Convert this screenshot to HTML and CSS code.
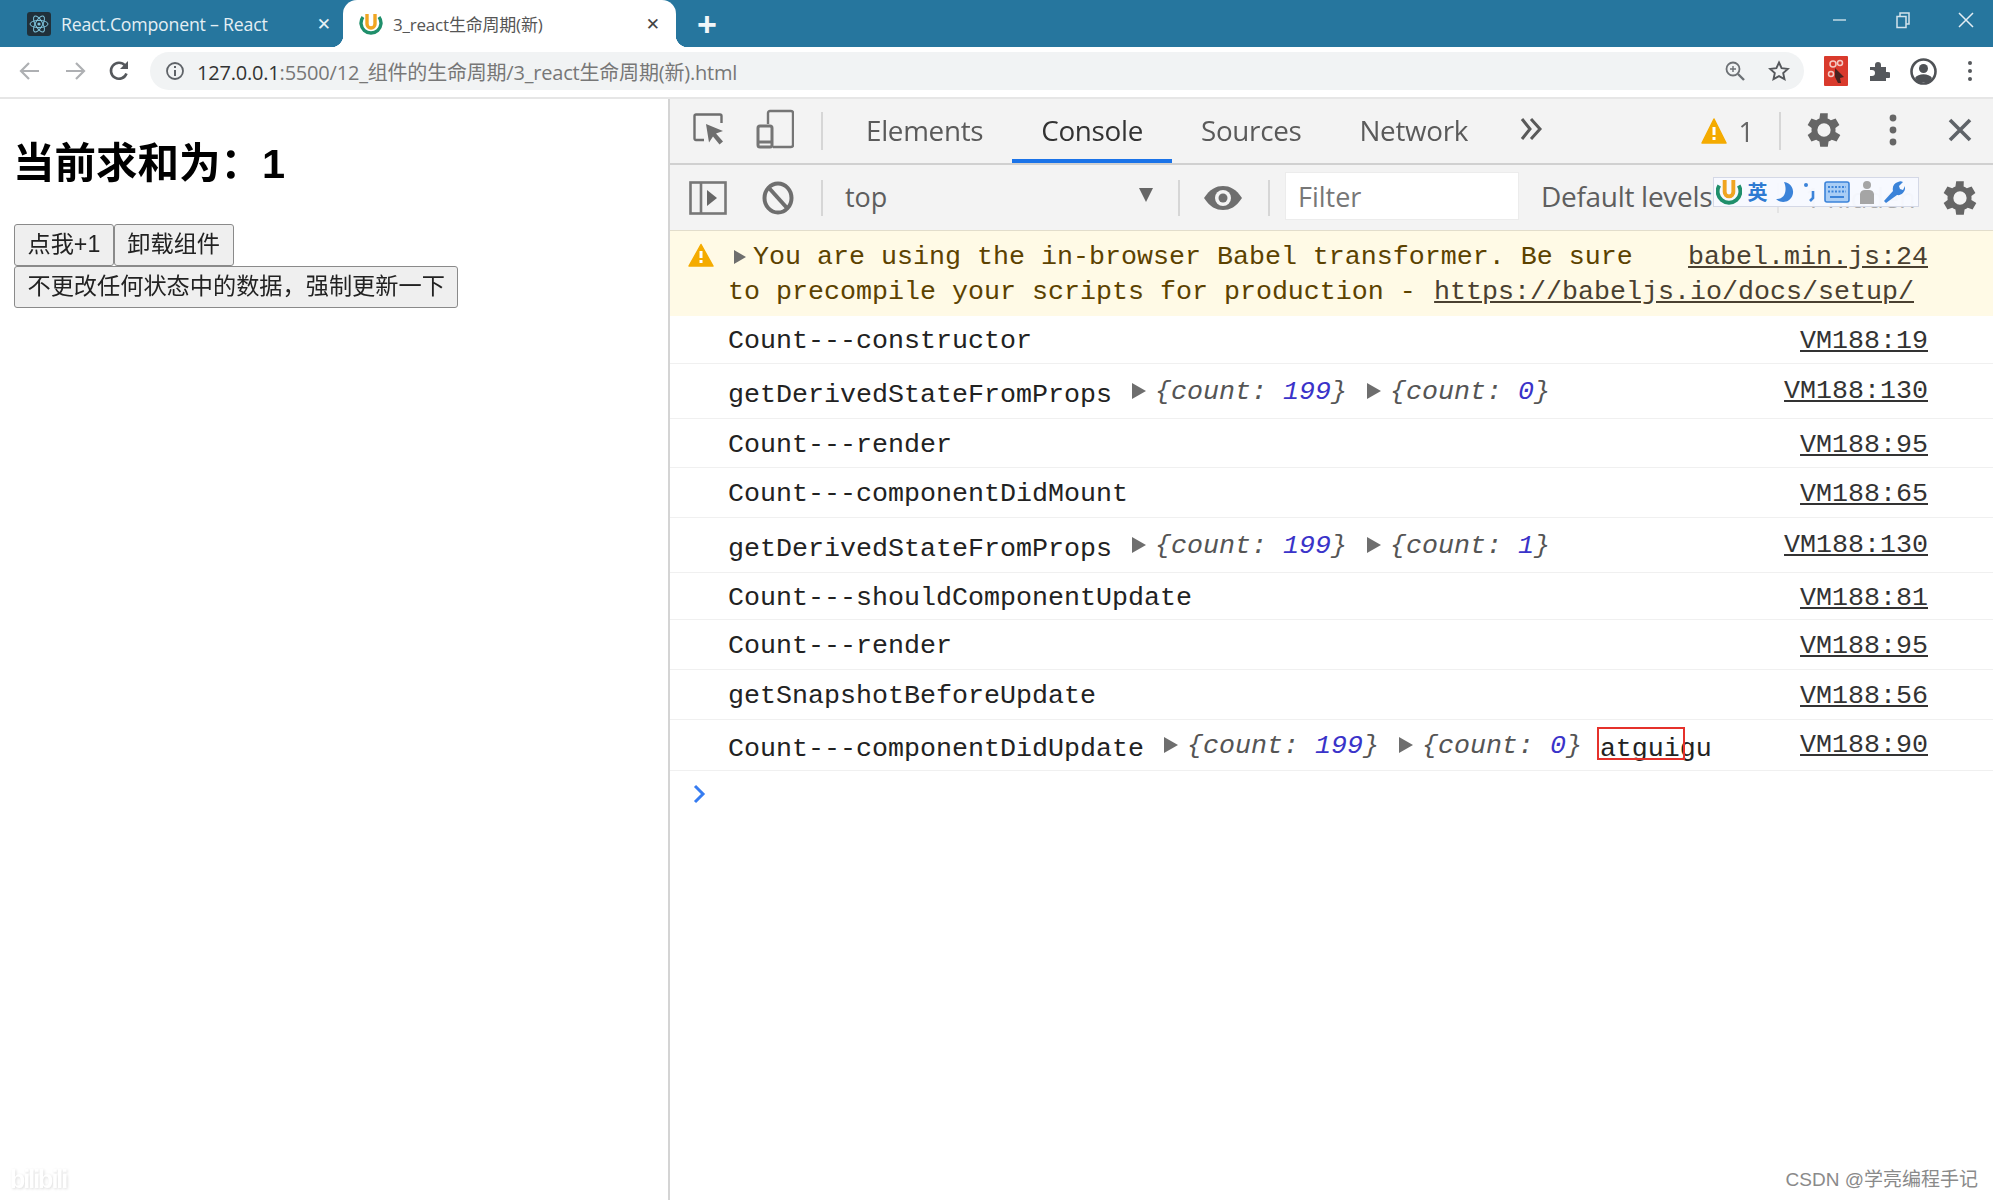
FILE: index.html
```html
<!DOCTYPE html>
<html lang="zh-CN">
<head>
<meta charset="utf-8">
<title>3_react生命周期(新)</title>
<link rel="stylesheet" href="styles.css">
</head>
<body>
<div class="app">
  <header class="tabstrip">
    <div class="tab">
      <svg class="favicon" width="24" height="24" viewBox="0 0 24 24"><rect width="24" height="24" rx="3" fill="#20303a"/><g fill="none" stroke="#7fc4dc" stroke-width="1"><ellipse cx="12" cy="12" rx="9" ry="3.6"/><ellipse cx="12" cy="12" rx="9" ry="3.6" transform="rotate(60 12 12)"/><ellipse cx="12" cy="12" rx="9" ry="3.6" transform="rotate(120 12 12)"/></g><circle cx="12" cy="12" r="1.6" fill="#7fc4dc"/></svg>
      <span class="tab-title tab-title-dark">React.Component – React</span>
      <span class="tab-close tab-close-light">✕</span>
    </div>
    <div class="tab tab-active">
      <svg class="favicon" width="24" height="26" viewBox="0 0 24 26"><path d="M4 6a10 10 0 1 0 16 0" fill="none" stroke="#1f8f6b" stroke-width="3.4"/><path d="M8 3v10a4 4 0 0 0 8 0V3" fill="none" stroke="#f0a522" stroke-width="3.4"/></svg>
      <span class="tab-title">3_react生命周期(新)</span>
      <span class="tab-close">✕</span>
    </div>
    <span class="newtab">+</span>
    <div class="winctl">
      <svg width="16" height="16" viewBox="0 0 16 16"><path d="M1 8h13" stroke="#b9d3e0" stroke-width="1.6"/></svg>
      <svg width="16" height="18" viewBox="0 0 16 18"><path d="M2 5.500h9v11H2zM5 5V2h9v11h-3" fill="none" stroke="#d3e3ec" stroke-width="1.500"/></svg>
      <svg width="16" height="18" viewBox="0 0 16 18"><path d="M1 2l14 14M15 2L1 16" stroke="#e3edf3" stroke-width="1.500"/></svg>
    </div>
  </header>

  <nav class="omnibar">
    <svg class="nav-back" width="24" height="24" viewBox="0 0 24 24"><path d="M21 12H4M11 4l-8 8 8 8" fill="none" stroke="#aeb0b3" stroke-width="2.200"/></svg>
    <svg class="nav-fwd" width="24" height="24" viewBox="0 0 24 24"><path d="M3 12h17M13 4l8 8-8 8" fill="none" stroke="#aeb0b3" stroke-width="2.200"/></svg>
    <svg class="nav-reload" width="24" height="24" viewBox="0 0 24 24"><path d="M19.500 14.500A8 8 0 1 1 18 6.500" fill="none" stroke="#55585c" stroke-width="2.600"/><path d="M21 2v8h-8z" fill="#55585c"/></svg>
    <div class="urlbox">
      <svg width="20" height="20" viewBox="0 0 20 20"><circle cx="10" cy="10" r="8" fill="none" stroke="#5f6368" stroke-width="1.800"/><path d="M10 9v6M10 5v2" stroke="#5f6368" stroke-width="2"/></svg>
      <span class="url"><span class="url-host">127.0.0.1</span>:5500/12_组件的生命周期/3_react生命周期(新).html</span>
      <svg class="url-zoom" width="22" height="22" viewBox="0 0 22 22"><circle cx="9" cy="9" r="6.500" fill="none" stroke="#6c7074" stroke-width="1.800"/><path d="M14 14l6 6" stroke="#6c7074" stroke-width="2.400"/><path d="M9 6v6M6 9h6" stroke="#6c7074" stroke-width="1.400"/></svg>
      <svg class="url-star" width="22" height="22" viewBox="0 0 22 22"><path d="M11 2.500l2.600 5.700 6.200.7-4.600 4.200 1.300 6.100L11 16.100l-5.500 3.100 1.300-6.100L2.200 8.900l6.200-.7z" fill="none" stroke="#55585c" stroke-width="1.900"/></svg>
    </div>
    <svg class="ext-red" width="24" height="30" viewBox="0 0 24 30"><rect width="24" height="30" rx="1" fill="#d93a2c"/><circle cx="9" cy="8" r="3" fill="none" stroke="#f3c9c2" stroke-width="1.500"/><circle cx="16" cy="7" r="2.500" fill="none" stroke="#f3c9c2" stroke-width="1.500"/><circle cx="7" cy="18" r="2.500" fill="none" stroke="#f3c9c2" stroke-width="1.500"/><path d="M11 12l9 9-4 1 1 5-3 0-3-6z" fill="#4a2320"/></svg>
    <svg class="ext-puzzle" width="22" height="22" viewBox="0 0 22 22"><path d="M2 7h5V5a3 3 0 0 1 6 0v2h5v5h2a3 3 0 0 1 0 6h-2v3H2v-5h2a3 3 0 0 0 0-6H2z" fill="#55585c"/></svg>
    <svg class="ext-profile" width="27" height="27" viewBox="0 0 27 27"><circle cx="13.500" cy="13.500" r="12" fill="#fff" stroke="#4f5256" stroke-width="2.600"/><circle cx="13.500" cy="10.500" r="4.500" fill="#4f5256"/><path d="M5 20c3-5 14-5 17 0l-3 4H8z" fill="#4f5256"/></svg>
    <svg class="ext-menu" width="6" height="24" viewBox="0 0 6 24"><g fill="#55585c"><circle cx="3" cy="4" r="2"/><circle cx="3" cy="12" r="2"/><circle cx="3" cy="20" r="2"/></g></svg>
  </nav>

  <main class="split">
    <section class="page">
      <h1 class="sum">当前求和为：1</h1>
      <div class="btns">
        <button class="btn">点我+1</button><button class="btn">卸载组件</button><button class="btn">不更改任何状态中的数据，强制更新一下</button>
      </div>
    </section>

    <section class="devtools">
      <div class="dt-tabs">
        <svg class="dt-inspect" width="34" height="34" viewBox="0 0 34 34"><path d="M11 28H3a1.500 1.500 0 0 1-1.500-1.500V4A1.500 1.500 0 0 1 3 2.500h24A1.500 1.500 0 0 1 28.500 4v7" fill="none" stroke="#6e6e6e" stroke-width="2.400"/><path d="M13 12l17 7-7 2.500 7 8-3.500 3-6.500-8-4 6z" fill="#6e6e6e"/></svg>
        <svg class="dt-device" width="38" height="40" viewBox="0 0 38 40"><path d="M12 15V4a2 2 0 0 1 2-2h21a2 2 0 0 1 2 2v32a2 2 0 0 1-2 2H17" fill="none" stroke="#757575" stroke-width="2.400"/><rect x="2" y="17" width="14" height="21" rx="2" fill="none" stroke="#757575" stroke-width="3"/><path d="M2 33h14" stroke="#757575" stroke-width="3"/></svg>
        <i class="vsep vsep-tabs"></i>
        <span class="dt-tab">Elements</span>
        <span class="dt-tab dt-tab-on">Console</span>
        <span class="dt-tab">Sources</span>
        <span class="dt-tab">Network</span>
        <svg class="dt-more" width="24" height="24" viewBox="0 0 24 24"><path d="M3 2l8 10-8 10M12 2l9 10-9 10" fill="none" stroke="#5a5a5a" stroke-width="3"/></svg>
        <div class="dt-right">
          <svg width="26" height="26" viewBox="0 0 26 26"><path d="M13 1L25 25H1z" fill="#f4ab00" stroke="#f4ab00" stroke-width="1.500" stroke-linejoin="round"/><path d="M13 9v8M13 19v3" stroke="#fff" stroke-width="3"/></svg>
          <span class="warn-count">1</span>
          <i class="vsep vsep-warn"></i>
          <svg class="gear" width="38" height="38" viewBox="2 2 20 20"><path fill="#666" d="M19.400 13a7.500 7.500 0 0 0 0-2l2.100-1.600-2-3.500-2.500 1a7.500 7.500 0 0 0-1.700-1L15.400 3.200h-4l-.4 2.700a7.500 7.500 0 0 0-1.700 1l-2.500-1-2 3.500L6.900 11a7.500 7.500 0 0 0 0 2l-2.100 1.600 2 3.500 2.500-1a7.500 7.500 0 0 0 1.700 1l.4 2.700h4l.4-2.700a7.500 7.500 0 0 0 1.700-1l2.500 1 2-3.500zM13.400 15.500a3.500 3.500 0 1 1 0-7 3.500 3.500 0 0 1 0 7z" transform="translate(-1.400 0)"/></svg>
          <svg class="kebab" width="10" height="34" viewBox="0 0 10 34"><g fill="#666"><circle cx="5" cy="5" r="3.400"/><circle cx="5" cy="17" r="3.400"/><circle cx="5" cy="29" r="3.400"/></g></svg>
          <svg class="dt-x" width="26" height="26" viewBox="0 0 26 26"><path d="M3 3l20 20M23 3L3 23" stroke="#5f6368" stroke-width="3.600"/></svg>
        </div>
      </div>

      <div class="dt-bar">
        <svg class="bar-side" width="38" height="34" viewBox="0 0 38 34"><rect x="1.500" y="1.500" width="35" height="31" fill="none" stroke="#777" stroke-width="2.600"/><path d="M12 2v30" stroke="#777" stroke-width="2.600"/><path d="M18 9l10 8-10 8z" fill="#666"/></svg>
        <svg class="bar-block" width="32" height="34" viewBox="0 0 32 34"><ellipse cx="16" cy="17" rx="13.500" ry="14.500" fill="none" stroke="#6e6e6e" stroke-width="4"/><path d="M7 7l18 20" stroke="#6e6e6e" stroke-width="4"/></svg>
        <i class="vsep vsep-bar1"></i>
        <span class="ctx">top</span>
        <svg class="caret" width="16" height="16" viewBox="0 0 16 16"><path d="M1 1h14L8 15z" fill="#666"/></svg>
        <i class="vsep vsep-bar2"></i>
        <svg class="eye" width="40" height="26" viewBox="0 0 40 26"><path d="M1 13C7 4 13 1 20 1s13 3 19 12c-6 9-12 12-19 12S7 22 1 13z" fill="#6e6e6e"/><circle cx="20" cy="13" r="8" fill="#f3f3f3"/><circle cx="20" cy="13" r="4.500" fill="#6e6e6e"/></svg>
        <i class="vsep vsep-bar3"></i>
        <div class="filter">Filter</div>
        <span class="levels">Default levels</span>
        <i class="vsep vsep-bar4"></i>
        <span class="hidden-count">1 hidden</span>
        <svg class="bar-gear" width="38" height="38" viewBox="2 2 20 20"><path fill="#666" d="M19.400 13a7.500 7.500 0 0 0 0-2l2.100-1.600-2-3.500-2.500 1a7.500 7.500 0 0 0-1.700-1L15.400 3.200h-4l-.4 2.700a7.500 7.500 0 0 0-1.700 1l-2.500-1-2 3.500L6.900 11a7.500 7.500 0 0 0 0 2l-2.100 1.600 2 3.500 2.500-1a7.500 7.500 0 0 0 1.700 1l.4 2.700h4l.4-2.700a7.500 7.500 0 0 0 1.700-1l2.500 1 2-3.500zM13.400 15.500a3.500 3.500 0 1 1 0-7 3.500 3.500 0 0 1 0 7z" transform="translate(-1.400 0)"/></svg>
        <div class="ime">
          <svg width="26" height="30" viewBox="0 0 24 26"><path d="M3 7a10.500 10.500 0 1 0 18 0" fill="none" stroke="#1f8f6b" stroke-width="3.600"/><path d="M8 2v11a4 4 0 0 0 8 0V2" fill="none" stroke="#f0a522" stroke-width="3.600"/></svg>
          <span class="ime-lang">英</span>
          <svg width="20" height="22" viewBox="0 0 20 22"><path d="M9 1a10 10 0 1 1-8 17c8 1 12-8 8-17z" fill="#3b83d9"/></svg>
          <svg width="14" height="20" viewBox="0 0 14 20"><circle cx="3" cy="3" r="2" fill="#3b83d9"/><path d="M10 9v7l-3 3" fill="none" stroke="#3b83d9" stroke-width="2.600"/></svg>
          <svg width="26" height="22" viewBox="0 0 26 22"><rect x="1" y="1" width="24" height="20" rx="2" fill="#a9cdf5" stroke="#3b83d9" stroke-width="1.600"/><path d="M4 6h18M4 10.500h18" stroke="#3b83d9" stroke-width="2" stroke-dasharray="2 1.500"/><path d="M6 16h14" stroke="#3b83d9" stroke-width="2"/></svg>
          <svg width="18" height="24" viewBox="0 0 18 24"><circle cx="9" cy="5" r="4" fill="#a5a5a5"/><path d="M2 24V14a5 5 0 0 1 5-4h4a5 5 0 0 1 5 4v10z" fill="#a5a5a5"/></svg>
          <svg width="22" height="24" viewBox="0 0 22 24"><path d="M3 23l-2-2 9-10c-1-4 1-8 5-9 2-1 3-1 5 0l-4 4 1 3 3 1 2-4c1 5-3 10-8 9z" fill="#3b83d9"/></svg>
        </div>
      </div>

      <div class="console">
        <div class="row row-warn">
          <svg class="warn-icon" width="26" height="24" viewBox="0 0 26 24"><path d="M13 1.500L25 23H1z" fill="#f4ab00" stroke="#f4ab00" stroke-width="1.500" stroke-linejoin="round"/><path d="M13 8v7M13 17v3" stroke="#fff" stroke-width="3"/></svg>
          <div class="warn-msg">
            <div class="warn-line"><i class="tri tri-warn"></i>You are using the in-browser Babel transformer. Be sure<a class="src src-warn">babel.min.js:24</a></div>
            <div class="warn-line warn-line2">to precompile your scripts for production - <a class="warn-link">https://babeljs.io/docs/setup/</a></div>
          </div>
        </div>
        <div class="row"><span class="log">Count---constructor</span><a class="src">VM188:19</a></div>
        <div class="row"><span class="log log-low">getDerivedStateFromProps</span><i class="tri"></i><span class="obj">{count: <b class="num">199</b>}</span><i class="tri"></i><span class="obj">{count: <b class="num">0</b>}</span><a class="src src-hi">VM188:130</a></div>
        <div class="row"><span class="log">Count---render</span><a class="src">VM188:95</a></div>
        <div class="row"><span class="log">Count---componentDidMount</span><a class="src">VM188:65</a></div>
        <div class="row"><span class="log log-low">getDerivedStateFromProps</span><i class="tri"></i><span class="obj">{count: <b class="num">199</b>}</span><i class="tri"></i><span class="obj">{count: <b class="num">1</b>}</span><a class="src src-hi">VM188:130</a></div>
        <div class="row"><span class="log">Count---shouldComponentUpdate</span><a class="src">VM188:81</a></div>
        <div class="row"><span class="log">Count---render</span><a class="src">VM188:95</a></div>
        <div class="row"><span class="log">getSnapshotBeforeUpdate</span><a class="src">VM188:56</a></div>
        <div class="row"><span class="log log-low">Count---componentDidUpdate</span><i class="tri"></i><span class="obj">{count: <b class="num">199</b>}</span><i class="tri"></i><span class="obj">{count: <b class="num">0</b>}</span><span class="log log-low log-tag">atguigu<i class="redbox"></i></span><a class="src src-hi">VM188:90</a></div>
        <div class="prompt"><svg width="14" height="20" viewBox="0 0 14 20"><path d="M3 2l8 8-8 8" fill="none" stroke="#367cf1" stroke-width="3"/></svg></div>
      </div>
    </section>
  </main>
  <span class="wm-bili">bilibili</span>
  <span class="wm-csdn">CSDN @学亮编程手记</span>
</div>
</body>
</html>
```

FILE: styles.css
```css
* { box-sizing: border-box; }
html, body { margin: 0; height: 100%; overflow: hidden; background: #fff; }
body { font-family: "Open Sans", "Noto Sans CJK SC", sans-serif; }
.app { position: relative; width: 1993px; height: 1200px; display: flex; flex-direction: column; overflow: hidden; filter: blur(.55px); }

.tabstrip { flex: 0 0 47px; display: flex; align-items: center; background: #26769e; }
.tab { position: relative; width: 343px; height: 47px; display: flex; align-items: center; padding: 0 12px 0 27px; }
.tab-active { width: 333px; padding: 0 16px 0 16px; background: #fff; border-radius: 14px 14px 0 0; }
.tab-active::before, .tab-active::after { content: ""; position: absolute; bottom: 0; width: 12px; height: 12px; }
.tab-active::before { left: -12px; background: radial-gradient(circle at 0 0, #26769e 12px, #fff 12.500px); }
.tab-active::after { right: -12px; background: radial-gradient(circle at 100% 0, #26769e 12px, #fff 12.500px); }
.favicon { flex: none; }
.tab-title { margin-left: 10px; flex: 1; font-family: "Open Sans", "Noto Sans CJK SC", sans-serif; font-size: 17px; color: #555; white-space: nowrap; letter-spacing: -.2px; }
.tab-title-dark { margin-left: 10px; font-size: 17.700px; color: #e4eff4; }
.tab-close { font-size: 17px; font-weight: 700; color: #444; font-family: "DejaVu Sans", sans-serif; }
.tab-close-light { color: #e8f1f5; }
.newtab { margin-left: 21px; font: 700 34px/1 "Liberation Sans", sans-serif; color: #f1f6f9; }
.winctl { margin-left: auto; display: flex; align-items: center; gap: 47px; padding-right: 19px; margin-top: -7px; }

.omnibar { flex: 0 0 52px; display: flex; align-items: center; background: #fff; border-bottom: 2px solid #e6e6e6; padding: 0 0 2px 18px; }
.nav-fwd { margin-left: 21px; }
.nav-reload { margin-left: 20px; }
.urlbox { width: 1654px; height: 38px; margin-left: 19px; flex: none; border-radius: 19px; background: #f1f3f4; display: flex; align-items: center; padding: 0 14px 0 15px; }
.url { margin-left: 12px; font: 20px "Open Sans", "Noto Sans CJK SC", sans-serif; color: #777; letter-spacing: -.2px; white-space: nowrap; }
.url-host { color: #333; }
.url-zoom { margin-left: auto; }
.url-star { margin-left: 22px; }
.ext-red { margin-left: 20px; }
.ext-puzzle { margin-left: 20px; }
.ext-profile { margin-left: 20px; }
.ext-menu { margin-left: 30px; }

.split { flex: 1; display: flex; min-height: 0; }
.page { width: 670px; flex: none; border-right: 2px solid #d4d4d4; padding: 0 0 0 14px; }
.sum { margin: 40px 0 0 -1px; font: 700 41.500px/50px "Liberation Sans", "Noto Sans CJK SC", sans-serif; color: #000; }
.btns { margin-top: 35px; font-size: 0; }
.btn { height: 42px; padding: 0 12.500px; margin: 0; vertical-align: top; font: 23.200px/1 "Liberation Sans", "Noto Sans CJK SC", sans-serif; color: #222; background: #efefef; border: 1.500px solid #8a8a8a; border-radius: 3px; }

.devtools { flex: 1; min-width: 0; display: flex; flex-direction: column; position: relative; }
.dt-tabs { flex: 0 0 64px; display: flex; align-items: center; background: #f3f3f3; border-bottom: 2px solid #d0d0d0; padding-left: 23px; color: #5a5a5a; }
.dt-inspect { margin-top: -4px; }
.dt-device { margin-left: 29px; margin-top: -4px; }
.vsep { width: 2px; height: 38px; background: #d6d6d6; flex: none; }
.vsep-tabs { margin-left: 27px; }
.dt-tab { height: 64px; display: flex; align-items: center; padding: 0 29px 3px; font-size: 27.800px; letter-spacing: -.3px; }
.dt-tab:first-of-type { margin-left: 14px; }
.dt-tab-on { color: #333; box-shadow: inset 0 -4px 0 #1a73e8; position: relative; }
.dt-more { margin-left: 22px; margin-top: -4px; }
.dt-right { margin-left: auto; display: flex; align-items: center; padding-right: 20px; }
.warn-count { margin-left: 12px; font-size: 27px; color: #666; }
.vsep-warn { margin-left: 25px; }
.gear { margin-left: 24px; margin-top: -2px; }
.kebab { margin-left: 45px; margin-top: -2px; }
.dt-x { margin-left: 49px; margin-top: -2px; }

.dt-bar { flex: 0 0 66px; position: relative; display: flex; align-items: center; background: #f3f3f3; border-bottom: 1px solid #e2ddcc; padding-left: 19px; color: #5e5e5e; }
.bar-block { margin-left: 35px; }
.vsep-bar1 { margin-left: 27px; height: 36px; }
.ctx { margin-left: 22px; font-size: 27px; width: 293px; padding-bottom: 3px; }
.caret { margin-top: -6px; }
.vsep-bar2 { margin-left: 24px; height: 36px; }
.eye { margin-left: 23px; }
.vsep-bar3 { margin-left: 25px; height: 36px; }
.filter { margin: -4px 0 0 15px; width: 234px; height: 48px; background: #fff; border: 1px solid #ececec; padding-left: 12px; font-size: 27px; line-height: 48px; color: #777; }
.levels { margin-left: 22px; font-size: 28px; width: 172px; white-space: nowrap; letter-spacing: -.3px; padding-bottom: 3px; }
.vsep-bar4 { margin-left: 64px; height: 30px; opacity: .5; }
.hidden-count { margin-left: 26px; font-size: 27px; color: #aaa; width: 110px; white-space: nowrap; }
.bar-gear { margin-left: 26px; }
.ime { position: absolute; left: 1043px; top: 12px; width: 206px; height: 30px; display: flex; align-items: center; gap: 7.500px; padding-left: 2px; background: rgba(247, 249, 255, .96); border: 1px solid #d4d8e6; }
.ime-lang { margin-left: -2px; color: #2f7bd2; font: 700 20px/1 "Noto Sans CJK SC", sans-serif; }

.console { flex: 1; display: grid; grid-template-columns: minmax(0, 1fr); grid-template-rows: 85px 48px 55px 49px 50px 55px 47px 50px 50px 51px 1fr; background: #fff; font: 26.670px "Liberation Mono", monospace; color: #222; }
.row { display: flex; align-items: center; padding: 3px 65px 0 58px; border-bottom: 1px solid #f0f0f0; white-space: nowrap; }
.log-low { padding-top: 5px; }
.log-tag { position: relative; margin-left: 18px; }
.redbox { position: absolute; left: -3px; top: -2px; width: 88px; height: 33px; border: 2.500px solid #e5312b; }
.tri { flex: none; width: 0; height: 0; margin: -4px 8px 0 20px; border-left: 14px solid #6e6e6e; border-top: 8px solid transparent; border-bottom: 8px solid transparent; }
.obj { font-style: italic; color: #555; margin: -2px 0 0 1px; }
.num { font-weight: 400; color: #3a33c9; }
.src { margin-left: auto; color: #333; text-decoration: underline; }
.src-hi { margin-top: -4px; }
.row-warn { position: relative; align-items: flex-start; background: #fffae6; border-bottom: 0; padding: 0 65px 0 18px; color: #5c4200; }
.warn-icon { flex: none; margin-top: 12px; }
.warn-msg { flex: 1; min-width: 0; margin-left: 14px; padding-top: 8px; }
.warn-line { display: flex; align-items: center; height: 35.500px; }
.warn-line2 { white-space: pre; }
.tri-warn { margin: 0 7px 0 6px; border-left-width: 12px; border-top-width: 7px; border-bottom-width: 7px; }
.src-warn { color: #4a4030; }
.warn-link { margin-left: auto; color: #4a4030; text-decoration: underline; padding-right: 14px; }
.prompt { padding: 11px 0 0 22px; }

.wm-bili { position: absolute; left: 10px; bottom: 8px; font: 700 25px/1 "Liberation Sans", sans-serif; letter-spacing: -2px; color: #fff; text-shadow: 1px 1px 3px #ddd; }
.wm-csdn { position: absolute; right: 15px; bottom: 8px; font: 19px/1.200 "Liberation Sans", "Noto Sans CJK SC", sans-serif; color: #8a8a8a; }
```
